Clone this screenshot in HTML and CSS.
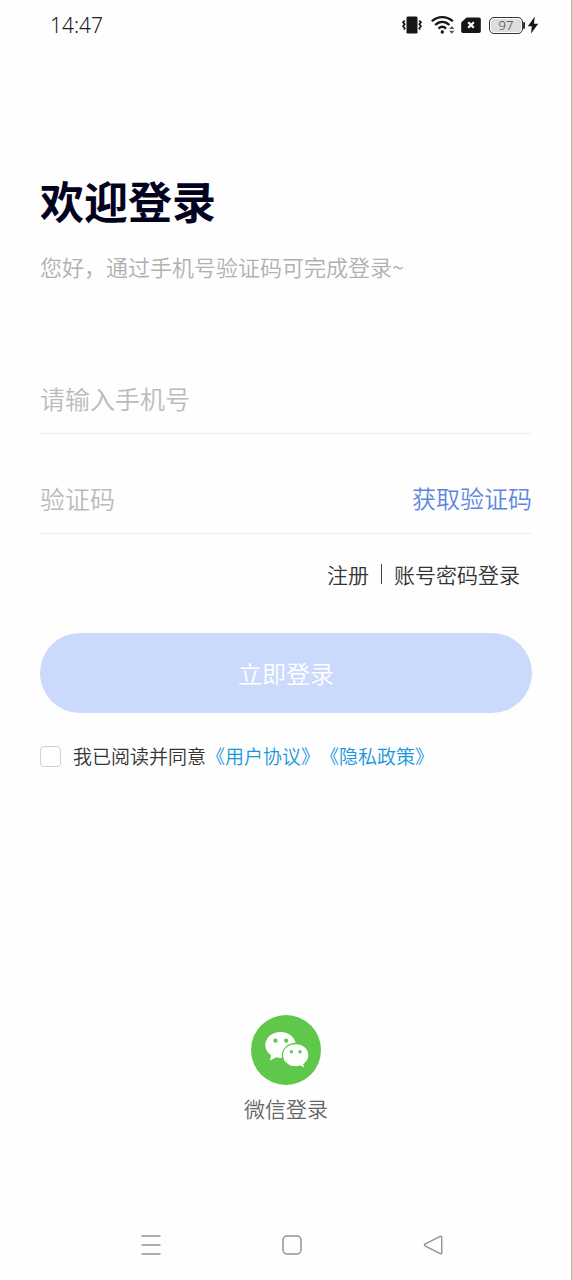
FILE: index.html
```
<!DOCTYPE html>
<html lang="zh-CN">
<head>
<meta charset="utf-8">
<meta name="viewport" content="width=device-width, initial-scale=1">
<title>欢迎登录</title>
<link rel="stylesheet" href="styles.css">
</head>
<body>
<div class="screen">
  <header class="status-bar">
    <time class="clock">14:47</time>
    <div class="status-icons">
      <svg width="20" height="20" viewBox="0 0 20 20" aria-hidden="true">
        <rect x="4.500" y="1.500" width="11" height="17" rx="1.200" fill="#161616"/>
        <path d="M2.800 5.500 1 7.300l1.700 1.900-1.700 2 1.700 1.900-.8 1.500M17.200 5.500l1.800 1.800-1.700 1.900 1.700 2-1.700 1.900.8 1.500" fill="none" stroke="#161616" stroke-width="1.700"/>
      </svg>
      <svg class="wifi" width="24" height="20" viewBox="0 0 24 20" aria-hidden="true">
        <g fill="none" stroke="#161616" stroke-width="2.300">
          <path d="M.8 6.300c5.800-5.700 15.200-5.700 21 0"/>
          <path d="M4.200 10c4.200-4.200 10-4.200 14.200 0"/>
          <path d="M7.500 13.600c2.300-2.200 5.300-2.200 7.600 0"/>
        </g>
        <circle cx="11.300" cy="17" r="1.700" fill="#161616"/>
        <path d="m20.800 11 2.600 3h-5.200zM20.800 18.800l2.600-3h-5.200z" fill="#555"/>
      </svg>
      <svg width="20" height="20" viewBox="0 0 20 20" aria-hidden="true">
        <path d="M5.500 2.500H18a1.800 1.800 0 0 1 1.800 1.800v11.900A1.800 1.800 0 0 1 18 18H2a1.800 1.800 0 0 1-1.800-1.800V7.500z" fill="#161616"/>
        <path d="m7.200 7.200 5.600 5.600m0-5.600-5.600 5.600" stroke="#fff" stroke-width="2.200"/>
      </svg>
      <div class="power">
        <span class="battery">97</span>
        <svg width="12" height="20" viewBox="0 0 12 20" aria-hidden="true">
          <path d="M7.800 1.500.8 11.300h4L4 18.500l7.300-9.800H7z" fill="#161616"/>
        </svg>
      </div>
    </div>
  </header>

  <main class="login">
    <h1 class="title">欢迎登录</h1>
    <p class="subtitle">您好，通过手机号验证码可完成登录~</p>

    <form class="form">
      <div class="field">
        <input class="field-input" type="tel" placeholder="请输入手机号" aria-label="手机号">
      </div>
      <div class="field">
        <input class="field-input" type="text" inputmode="numeric" placeholder="验证码" aria-label="验证码">
        <button class="code-button" type="button">获取验证码</button>
      </div>
      <nav class="links">
        <a class="link" href="#register">注册</a>
        <a class="link link-divided" href="#password">账号密码登录</a>
      </nav>
      <button class="submit" type="submit">立即登录</button>
      <div class="agreement">
        <input class="agree-box" type="checkbox" id="agree">
        <p class="agree-text"><label for="agree">我已阅读并同意</label><a class="policy" href="#terms">《用户协议》</a><a class="policy" href="#privacy">《隐私政策》</a></p>
      </div>
    </form>

    <button class="wechat" type="button">
      <svg width="70" height="70" viewBox="0 0 70 70" aria-hidden="true">
        <circle cx="35" cy="35" r="35" fill="#5fc84b"/>
        <path d="M29.500 17C21 17 14.300 22.700 14.300 30c0 4.300 2.300 8 5.800 10.400L19 45.500l6.200-3.200c1.400.4 2.900.6 4.300.6 8.500 0 15.300-5.700 15.300-12.900S38 17 29.500 17z" fill="#fff"/>
        <path d="M44.700 28.500c-7.400 0-13.300 5.100-13.300 11.700s5.900 11.800 13.300 11.800c1.700 0 3.300-.3 4.800-.8l4.600 2.600-1.200-4.500c3.100-2.200 5-5.400 5-9.100 0-6.600-5.900-11.700-13.200-11.700z" fill="#fff" stroke="#5fc84b" stroke-width="1.300"/>
        <g fill="#5fc84b"><circle cx="24.500" cy="25.700" r="2.100"/><circle cx="35.200" cy="25.700" r="2.100"/><circle cx="40.400" cy="36.700" r="1.700"/><circle cx="49" cy="36.700" r="1.700"/></g>
      </svg>
      <span>微信登录</span>
    </button>
  </main>

  <nav class="system-nav" aria-label="系统导航">
    <button class="nav-key" type="button" aria-label="最近任务">
      <svg width="22" height="22" viewBox="0 0 22 22"><path d="M1.500 2h19M1.500 11h19M1.500 20h19" stroke="#929292" stroke-width="1.500"/></svg>
    </button>
    <button class="nav-key" type="button" aria-label="主屏幕">
      <svg width="22" height="22" viewBox="0 0 22 22"><rect x="2" y="2" width="18" height="18" rx="4" fill="none" stroke="#929292" stroke-width="1.500"/></svg>
    </button>
    <button class="nav-key" type="button" aria-label="返回">
      <svg width="22" height="22" viewBox="0 0 22 22"><path d="M18.200 2.400 2.900 10.200a.9.900 0 0 0 0 1.600l15.300 7.900c.8.400 1.500 0 1.500-.8V3.200c0-.8-.7-1.200-1.500-.8z" fill="none" stroke="#929292" stroke-width="1.400"/></svg>
    </button>
  </nav>
</div>
</body>
</html>
```
FILE: styles.css
```
* {
  box-sizing: border-box;
}

body {
  margin: 0;
  background: #fefefe;
  color: #333;
  font-family: "Noto Sans CJK SC", sans-serif;
  font-weight: 350;
  text-spacing-trim: space-all;
}

button,
input {
  margin: 0;
  padding: 0;
  border: 0;
  background: none;
  color: inherit;
  font: inherit;
}

button {
  cursor: pointer;
}

a {
  text-decoration: none;
}

svg {
  display: block;
}

.screen {
  display: flex;
  flex-direction: column;
  min-height: 100vh;
  border-right: 1px solid #b4b4b4;
}

.status-bar {
  display: flex;
  align-items: center;
  justify-content: space-between;
  height: 50px;
  padding: 0 32px 0 50px;
}

.clock {
  color: #222;
  font-family: "Noto Sans", sans-serif;
  font-size: 21px;
  line-height: 28px;
}

.status-icons {
  display: flex;
  align-items: center;
  gap: 8px;
}

.wifi {
  margin: 0 -2px 0 1px;
}

.power {
  display: flex;
  align-items: center;
  gap: 4px;
}

.battery {
  position: relative;
  width: 34px;
  height: 17px;
  border: 1px solid #333;
  border-radius: 5px;
  background: #ddd;
  box-shadow: inset 0 0 0 1px #fff;
  color: #444;
  font-family: "Noto Sans", sans-serif;
  font-size: 13px;
  line-height: 15px;
  text-align: center;
}

.battery::after {
  content: "";
  position: absolute;
  top: 4px;
  right: -3px;
  width: 2px;
  height: 7px;
  border-radius: 1px;
  background: #333;
}

.login {
  display: flex;
  flex: 1;
  flex-direction: column;
  padding: 118px 39px 0 40px;
}

.title {
  margin: 0;
  color: #030320;
  font-size: 44px;
  font-weight: 700;
  line-height: 64px;
}

.subtitle {
  margin: 18px 0 0;
  color: #b0b0b0;
  font-size: 22px;
  line-height: 32px;
}

.form {
  display: flex;
  flex-direction: column;
  padding-top: 52px;
}

.field {
  display: flex;
  align-items: center;
  height: 100px;
  padding-top: 28px;
  border-bottom: 1px solid #eee;
}

.field-input {
  flex: 1;
  min-width: 0;
  height: 40px;
  font-size: 25px;
  outline: none;
}

.field-input::placeholder {
  color: #bbb;
  opacity: 1;
}

.code-button {
  color: #5c87de;
  font-size: 24px;
  line-height: 40px;
}

.links {
  display: flex;
  align-items: center;
  justify-content: flex-end;
  gap: 12px;
  padding: 25px 12px 0 0;
}

.link {
  color: #333;
  font-size: 21px;
  line-height: 30px;
}

.link-divided {
  display: flex;
  align-items: center;
  gap: 12px;
}

.link-divided::before {
  content: "";
  width: 1px;
  height: 20px;
  background: #444;
}

.submit {
  height: 80px;
  margin-top: 44px;
  padding-bottom: 2px;
  border-radius: 40px;
  background: #cbdafc;
  color: #fff;
  font-size: 24px;
}

.agreement {
  display: flex;
  align-items: center;
  gap: 12px;
  padding-top: 29px;
}

.agree-box {
  flex: none;
  width: 21px;
  height: 21px;
  border: 1px solid #d0d0d0;
  border-radius: 4px;
  background: #fff;
  appearance: none;
}

.agree-box:checked {
  background: #5c87de;
}

.agree-text {
  margin: 0;
  font-size: 19px;
  line-height: 28px;
}

.policy {
  color: #1796db;
}

.wechat {
  display: flex;
  flex-direction: column;
  align-items: center;
  align-self: center;
  gap: 8px;
  margin-top: auto;
  padding-bottom: 87px;
  color: #666;
  font-size: 21px;
  line-height: 30px;
}

.system-nav {
  display: grid;
  grid-template-columns: repeat(3, 1fr);
  height: 70px;
  padding: 0 68px 0 81px;
}

.nav-key {
  display: flex;
  align-items: center;
  justify-content: center;
}
```
